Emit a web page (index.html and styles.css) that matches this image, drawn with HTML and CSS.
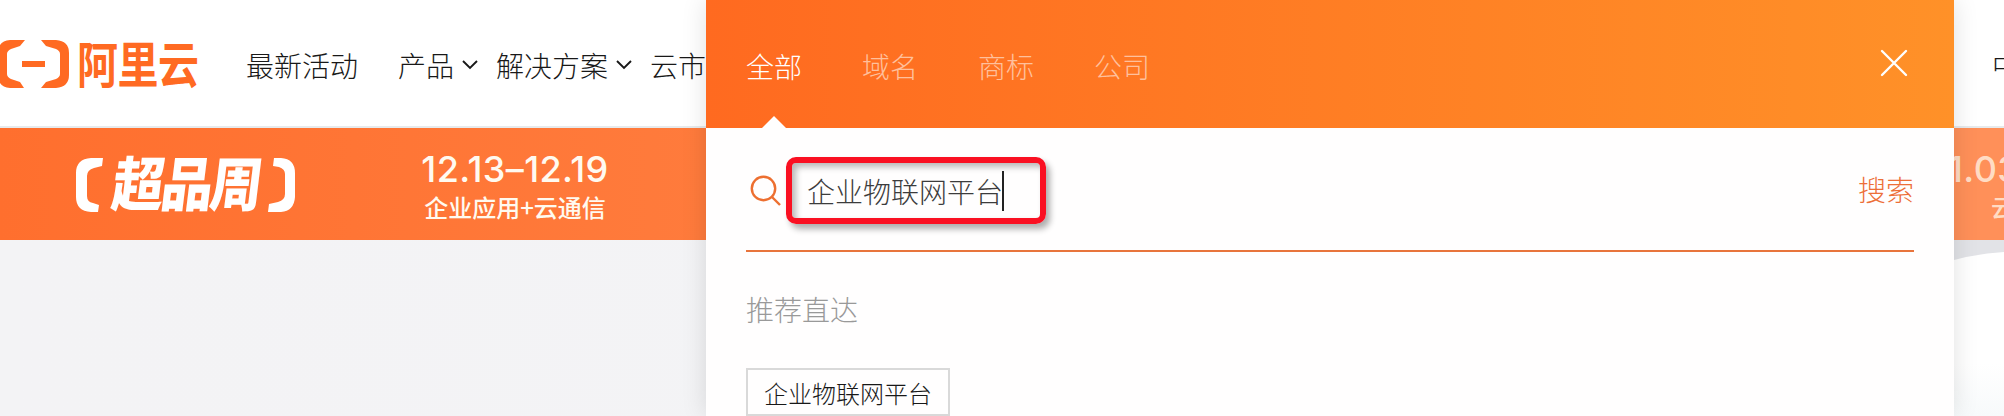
FILE: index.html
```html
<!DOCTYPE html>
<html lang="zh-CN">
<head>
<meta charset="utf-8">
<title>阿里云</title>
<link rel="stylesheet" href="styles.css">
</head>
<body>
<div class="page">
  <header class="header">
    <div class="logo">
      <svg class="logo-mark" width="70" height="48" viewBox="0 0 70 48">
        <path d="M25 0H10Q-2 1-2 13V35Q-2 47 10 48H24L20 42 11 39Q7 37 7 34V14Q7 11 11 9L20 6Z"/>
        <path d="M41 0H56Q69 1 69 13V35Q69 47 56 48H41L46 42 56 39Q60 37 60 34V14Q60 11 56 9L46 6Z"/>
        <path d="M22 21H45V27H22Z"/>
      </svg>
      <span class="logo-text">阿里云</span>
    </div>
    <nav class="nav">
      <a class="nav-item nav-first">最新活动</a>
      <a class="nav-item nav-menu">产品<svg class="chevron" width="16" height="10" viewBox="0 0 16 10"><path d="M1 1L8 8L15 1"/></svg></a>
      <a class="nav-item nav-menu">解决方案<svg class="chevron" width="16" height="10" viewBox="0 0 16 10"><path d="M1 1L8 8L15 1"/></svg></a>
      <a class="nav-item">云市</a>
    </nav>
    <span class="lang">中</span>
  </header>
  <section class="banner">
    <div class="brand">
      <svg class="bracket" width="28" height="55" viewBox="0 0 28 55"><path d="M15 0H27L26 8 18 10Q11 12 11 18V38Q11 44 17 45L23 47 22 54H15Q0 53 0 39V15Q0 1 15 0Z"/></svg>
      <span class="brand-text">超品周</span>
      <svg class="bracket" width="28" height="55" viewBox="0 0 28 55"><path d="M6 0H13Q27 1 27 15V39Q26 53 13 54H0L1 46 10 44Q17 42 17 36V16Q17 11 11 9L5 8Z"/></svg>
    </div>
    <div class="promo">
      <div class="promo-date">12.13–12.19</div>
      <div class="promo-name">企业应用+云通信</div>
    </div>
    <div class="next">
      <div class="promo-date">1.03</div>
      <div class="promo-name next-name">云</div>
    </div>
  </section>
  <section class="hero">
    <svg class="hero-art" width="50" height="176" viewBox="0 0 50 176"><path d="M0 0H50V12Q22 14 0 20Z"/></svg>
  </section>

  <div class="search-panel">
    <div class="tabs">
      <span class="tab active">全部</span>
      <span class="tab">域名</span>
      <span class="tab">商标</span>
      <span class="tab">公司</span>
      <svg class="close" width="28" height="28" viewBox="0 0 28 28"><path d="M2 2L26 26M26 2L2 26"/></svg>
    </div>
    <div class="panel-body">
      <div class="search-row">
        <svg class="search-icon" width="32" height="32" viewBox="0 0 32 32"><circle cx="13.5" cy="13.5" r="11.7"/><path d="M22 22L30 30"/></svg>
        <div class="search-box"><span class="query">企业物联网平台</span><i class="caret"></i></div>
        <span class="submit">搜索</span>
      </div>
      <div class="section-title">推荐直达</div>
      <span class="tag">企业物联网平台</span>
    </div>
  </div>
</div>
</body>
</html>
```
FILE: styles.css
```css
* { box-sizing: border-box; }
body {
  margin: 0;
  font-family: "Noto Sans CJK SC", sans-serif;
  font-weight: 300;
  font-size: 28px;
  line-height: 40px;
  color: #181818;
}
.page {
  position: relative;
  width: 2004px;
  height: 416px;
  overflow: hidden;
  display: flex;
  flex-direction: column;
}
svg { display: block; flex: none; }
.header {
  display: flex;
  flex: none;
  align-items: center;
  height: 128px;
  background: #fff;
  border-bottom: 2px solid #e7eaec;
  white-space: nowrap;
}
.logo { display: flex; align-items: center; width: 246px; gap: 7px; padding-top: 2px; }
.logo-mark { fill: #ff6a22; }
.logo-text {
  margin-top: -5px;
  font-size: 41px;
  font-weight: 700;
  line-height: 48px;
  letter-spacing: -0.5px;
  color: #ff6a22;
  transform: scaleY(1.19);
}
.nav { display: flex; align-items: center; padding-top: 4px; }
.nav-first { margin-right: 40px; }
.nav-item { display: flex; align-items: center; }
.nav-menu { margin-right: 18px; }
.chevron { margin-left: 8px; fill: none; stroke: #181818; stroke-width: 1.9; }
.lang { margin-left: auto; padding-top: 4px; width: 12px; }

.banner {
  display: flex;
  flex: none;
  height: 112px;
  background: linear-gradient(90deg, #ff6f2e, #ff7b3c 706px, #ff9059 1954px);
  color: #fffaf0;
  white-space: nowrap;
  overflow: hidden;
}
.brand { display: flex; padding: 30px 0 0 76px; width: 420px; }
.bracket { fill: #fff; }
.brand-text {
  width: 150px;
  margin: -2px 7px 0;
  font-size: 52px;
  font-weight: 900;
  line-height: 54px;
  letter-spacing: -3px;
  color: #fff;
  transform: skewX(-7deg) scaleY(1.13);
}
.promo { padding-top: 19px; width: 190px; text-align: center; }
.promo-date {
  font-family: Inter, sans-serif;
  font-size: 36px;
  font-weight: 500;
  line-height: 44px;
  letter-spacing: 0.4px;
}
.promo-name { font-size: 24px; font-weight: 500; line-height: 32px; }
.next { margin-left: auto; width: 56px; padding-top: 19px; color: #ffdcc4; }
.next-name { padding-left: 43px; }

.hero {
  flex: 1;
  display: flex;
  justify-content: flex-end;
  background: linear-gradient(90deg, #f3f3f5, #f3f4f6);
}
.hero-art { background: linear-gradient(#fff 70%, #f7fafb); fill: #e2e3e7; }

.search-panel {
  position: absolute;
  left: 706px;
  top: 0;
  width: 1248px;
  height: 416px;
  background: #fffefe;
  box-shadow: 0 0 24px rgba(0, 0, 0, .12);
}
.tabs {
  display: flex;
  align-items: center;
  gap: 60px;
  height: 128px;
  padding: 4px 46px 0 40px;
  background: linear-gradient(90deg, #ff6a20, #ff9128);
  color: #ffc09c;
}
.tab { position: relative; }
.active { color: #fff; }
.active::after {
  content: "";
  position: absolute;
  left: 16px;
  top: 70px;
  border: 12px solid transparent;
  border-top: 0;
  border-bottom-color: #fffefe;
}
.close { margin: -6px 0 0 auto; fill: none; stroke: #fff; stroke-width: 2.4; stroke-linecap: round; }
.panel-body { padding: 0 40px; }
.search-row {
  display: flex;
  align-items: flex-start;
  height: 124px;
  border-bottom: 2px solid #e8743c;
  padding-top: 29px;
}
.search-icon { margin: 18px 4px 0 4px; fill: none; stroke: #ed6f30; stroke-width: 2.4; }
.search-box {
  display: flex;
  align-items: center;
  width: 260px;
  height: 67px;
  padding-left: 15px;
  border: 6px solid #fa1022;
  border-radius: 10px;
  box-shadow: 4px 5px 6px rgba(0, 0, 0, .32), inset 4px 4px 6px rgba(0, 0, 0, .28);
  color: #3c3c3c;
}
.caret { width: 2px; height: 40px; margin-left: -1px; background: #222; }
.submit { margin: 12px 0 0 auto; color: #ed6f38; }
.section-title { margin-top: 37px; color: #999; }
.tag {
  display: block;
  width: 204px;
  height: 48px;
  margin-top: 39px;
  border: 2px solid #d9d9d9;
  font-size: 24px;
  line-height: 45px;
  text-align: center;
  white-space: nowrap;
}
```
